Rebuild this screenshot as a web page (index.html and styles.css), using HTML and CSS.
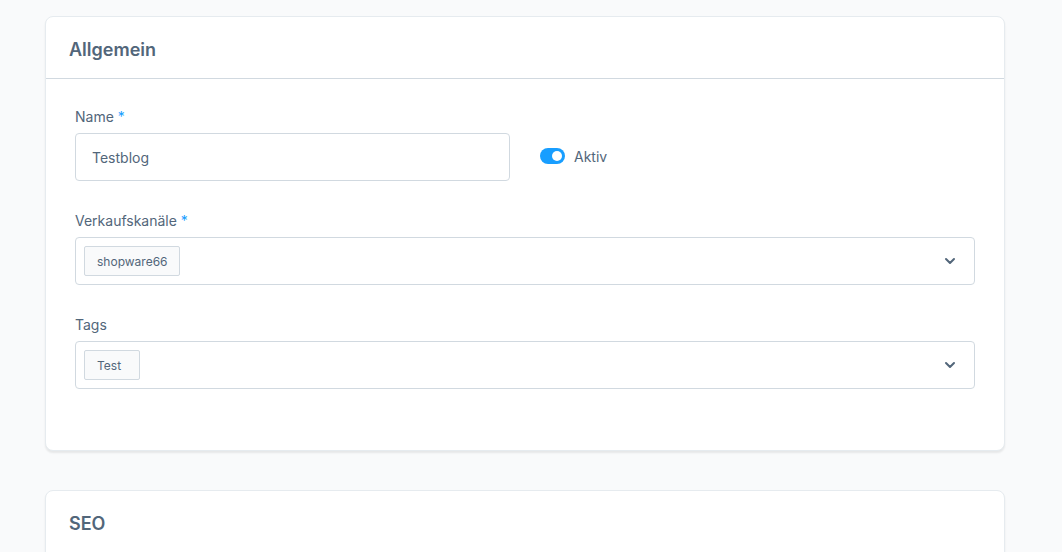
FILE: index.html
```html
<!DOCTYPE html>
<html lang="de">
<head>
 <meta charset="UTF-8">
 <title>Blog bearbeiten</title>
 <link rel="stylesheet" href="styles.css">
</head>
<body>
<div class="page">
 <div class="card">
  <div class="card-header">Allgemein</div>
  <div class="card-body">
   <div class="row">
    <div class="field">
     <label class="field-label">Name <span class="req">*</span></label>
     <input class="text-input" type="text" value="Testblog">
    </div>
    <div class="switch-field">
     <span class="switch"><span class="knob"></span></span>
     <span class="switch-label">Aktiv</span>
    </div>
   </div>
   <div class="field">
    <label class="field-label">Verkaufskanäle <span class="req">*</span></label>
    <div class="select-box">
     <span class="chip">shopware66</span>
     <svg class="chevron" width="12" height="8" viewBox="0 0 12 8"><path d="M2 2l4 4 4-4" fill="none" stroke="#52667a" stroke-width="2" stroke-linecap="round" stroke-linejoin="round"/></svg>
    </div>
   </div>
   <div class="field">
    <label class="field-label">Tags</label>
    <div class="select-box">
     <span class="chip chip-wide">Test</span>
     <svg class="chevron" width="12" height="8" viewBox="0 0 12 8"><path d="M2 2l4 4 4-4" fill="none" stroke="#52667a" stroke-width="2" stroke-linecap="round" stroke-linejoin="round"/></svg>
    </div>
   </div>
  </div>
 </div>

 <div class="card">
  <div class="card-header">SEO</div>
  <div class="card-body">
   <div class="field">
    <label class="field-label">Meta-Titel</label>
    <input class="text-input" type="text" value="">
   </div>
  </div>
 </div>
</div>
</body>
</html>
```

FILE: styles.css
```css
* {
    margin: 0;
    padding: 0;
    box-sizing: border-box;
    font-family: 'Inter', 'Noto Sans', sans-serif;
}

body {
    background-color: #f9fafb;
    color: #52667a;
}

.page {
    padding: 16px 0 40px 45px;
}

.card {
    width: 960px;
    background-color: #fff;
    border: 1px solid #e6ebef;
    border-radius: 8px;
    box-shadow: 0 2px 2px rgba(0, 0, 0, 0.08);
    margin-bottom: 39px;
}

.card-header {
    height: 62px;
    display: flex;
    align-items: center;
    padding: 4px 23px 0;
    font-size: 18px;
    font-weight: 600;
    color: #52667a;
    border-bottom: 1px solid #d1d9e0;
}

.card-body {
    padding: 30px 29px 29px;
}

.row {
    display: grid;
    grid-template-columns: 435px 1fr;
    column-gap: 30px;
}

.field {
    margin-bottom: 32px;
}

.field-label {
    display: block;
    font-size: 14px;
    line-height: 16px;
    margin-bottom: 8px;
    color: #52667a;
}

.req {
    color: #189eff;
}

.text-input {
    width: 100%;
    height: 48px;
    border: 1px solid #d1d9e0;
    border-radius: 4px;
    padding: 0 16px;
    font-size: 14px;
    color: #52667a;
    background-color: #fff;
    outline: none;
}

.switch-field {
    display: flex;
    align-items: center;
    gap: 9px;
    padding-top: 22px;
    height: 72px;
}

.switch {
    position: relative;
    display: inline-block;
    width: 25px;
    height: 16px;
    border-radius: 8px;
    background-color: #189eff;
}

.knob {
    position: absolute;
    top: 3px;
    right: 3px;
    width: 10px;
    height: 10px;
    border-radius: 50%;
    background-color: #fff;
}

.switch-label {
    font-size: 14px;
    color: #52667a;
}

.select-box {
    height: 48px;
    border: 1px solid #d1d9e0;
    border-radius: 4px;
    display: flex;
    align-items: center;
    padding: 0 18px 0 8px;
}

.chip {
    height: 30px;
    display: inline-flex;
    align-items: center;
    padding: 0 11px 0 12px;
    border: 1px solid #d1d9e0;
    border-radius: 2px;
    background-color: #f9fafb;
    font-size: 12px;
    color: #52667a;
}

.chip-wide {
    padding-right: 18px;
}

.chevron {
    margin-left: auto;
}
```
